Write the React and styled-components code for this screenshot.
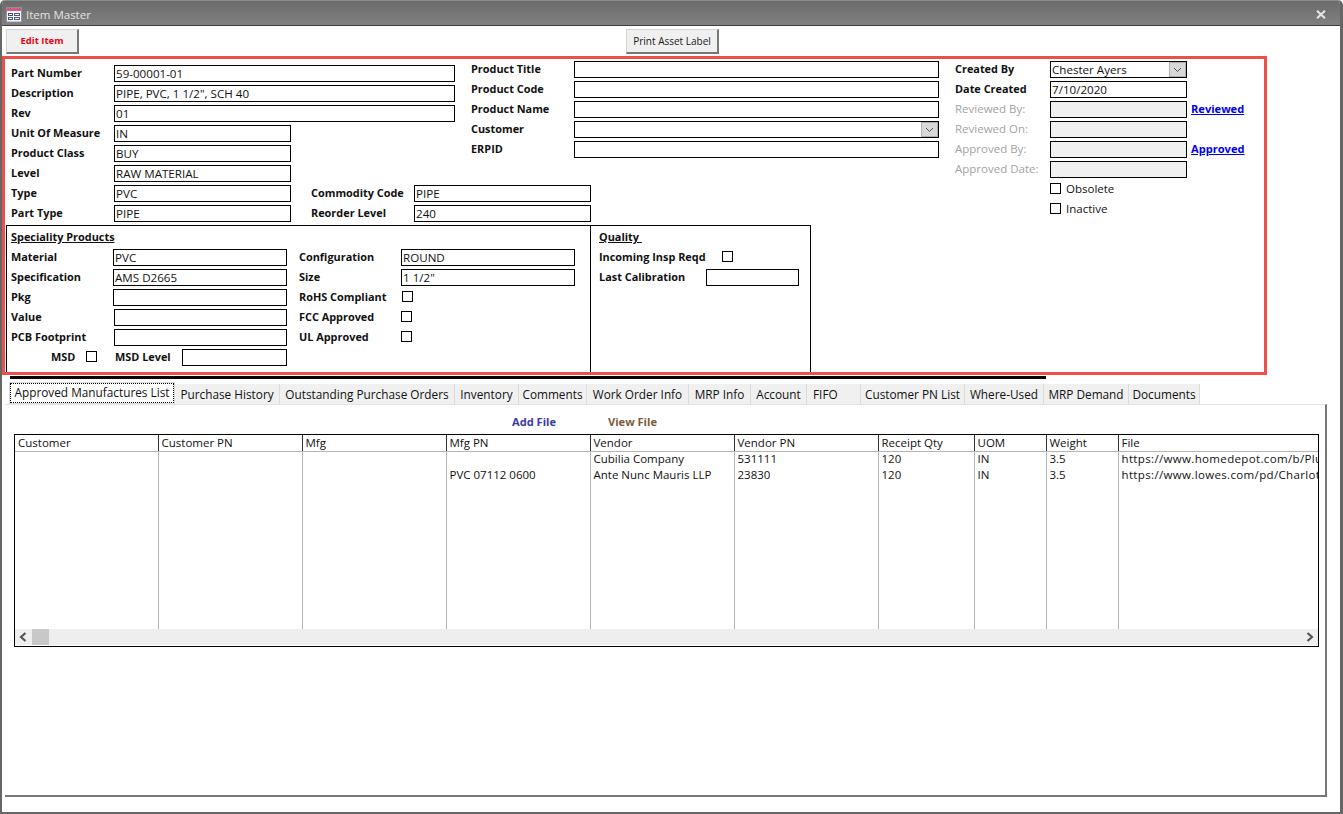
import React from 'react';
import styled, { createGlobalStyle } from 'styled-components';

const GlobalStyle = createGlobalStyle`
  * { box-sizing: border-box; }
  body {
    margin: 0;
    background: #fff;
    font-family: "Open Sans", "Noto Sans", sans-serif;
    font-size: 11.5px;
    color: #111;
  }
`;

const tabs = [
  ['Approved Manufactures List', 166],
  ['Purchase History', 105],
  ['Outstanding Purchase Orders', 175],
  ['Inventory', 64],
  ['Comments', 68],
  ['Work Order Info', 102],
  ['MRP Info', 62],
  ['Account', 56],
  ['FIFO', 54, true],
  ['Customer PN List', 104],
  ['Where-Used', 79],
  ['MRP Demand', 85],
  ['Documents', 71],
];

const columns = [
  ['Customer', 143],
  ['Customer PN', 144],
  ['Mfg', 144],
  ['Mfg PN', 144],
  ['Vendor', 144],
  ['Vendor PN', 144],
  ['Receipt Qty', 96],
  ['UOM', 72],
  ['Weight', 72],
  ['File', 200],
];

const rows = [
  ['', '', '', '', 'Cubilia Company', '531111', '120', 'IN', '3.5', 'https://www.homedepot.com/b/Plumbing'],
  ['', '', '', 'PVC 07112 0600', 'Ante Nunc Mauris LLP', '23830', '120', 'IN', '3.5', 'https://www.lowes.com/pd/Charlotte-Pipe'],
];

const FormIcon = () => (
  <svg width="16" height="16" viewBox="0 0 16 16">
    <rect x="0.5" y="0.5" width="15" height="14.5" fill="#f6f8fc" stroke="#9a8aa0" />
    <rect x="1" y="1" width="14" height="3" fill="#d9587f" />
    <rect x="2.5" y="6.5" width="4" height="2" fill="#fff" stroke="#46577c" />
    <rect x="8.5" y="6.5" width="5" height="2" fill="#fff" stroke="#46577c" />
    <rect x="2.5" y="10.5" width="4" height="2" fill="#fff" stroke="#46577c" />
    <rect x="8.5" y="10.5" width="5" height="2" fill="#fff" stroke="#46577c" />
  </svg>
);

const CloseIcon = () => (
  <svg width="10" height="9" viewBox="0 0 10 9">
    <path d="M1 0.8 L9 8.2 M9 0.8 L1 8.2" fill="none" stroke="#e2e2e2" strokeWidth="2.2" />
  </svg>
);

const Chevron = ({ dir }) => (
  <svg width="9" height="10" viewBox="0 0 9 10">
    <polyline
      points={dir === 'left' ? '6.5,1 2,5 6.5,9' : '2.5,1 7,5 2.5,9'}
      fill="none"
      stroke="#555"
      strokeWidth="2.2"
    />
  </svg>
);

const Field = ({ w, value, disabled }) => <Input $w={w} $disabled={disabled}>{value}</Input>;

const Combo = ({ w, value }) => (
  <Input $w={w}>
    {value}
    <ComboButton>
      <svg width="9" height="6" viewBox="0 0 9 6">
        <polyline points="1,1 4.5,4.5 8,1" fill="none" stroke="#555" strokeWidth="1" />
      </svg>
    </ComboButton>
  </Input>
);

const Row = ({ label, labelW, muted, children }) => (
  <FieldRow>
    <Label $w={labelW} $muted={muted}>{label}</Label>
    {children}
  </FieldRow>
);

const App = () => {
  return (
    <Window>
      <GlobalStyle />
      <TitleBar>
        <FormIcon />
        <Title>Item Master</Title>
        <CloseSlot><CloseIcon /></CloseSlot>
      </TitleBar>

      <Toolbar>
        <Button $red>Edit Item</Button>
        <Button $offset={547} $w={93}>Print Asset Label</Button>
      </Toolbar>

      <Frame>
        <TopGrid>
          <LeftCol>
            <Row label="Part Number" labelW={103}><Field w={341} value="59-00001-01" /></Row>
            <Row label="Description" labelW={103}><Field w={341} value={'PIPE, PVC, 1 1/2", SCH 40'} /></Row>
            <Row label="Rev" labelW={103}><Field w={341} value="01" /></Row>
            <Row label="Unit Of Measure" labelW={103}><Field w={177} value="IN" /></Row>
            <Row label="Product Class" labelW={103}><Field w={177} value="BUY" /></Row>
            <Row label="Level" labelW={103}><Field w={177} value="RAW MATERIAL" /></Row>
          </LeftCol>

          <MidCol>
            <Row label="Product Title" labelW={103}><Field w={365} /></Row>
            <Row label="Product Code" labelW={103}><Field w={365} /></Row>
            <Row label="Product Name" labelW={103}><Field w={365} /></Row>
            <Row label="Customer" labelW={103}><Combo w={365} /></Row>
            <Row label="ERPID" labelW={103}><Field w={365} /></Row>
          </MidCol>

          <RightCol>
            <Row label="Created By" labelW={95}><Combo w={137} value="Chester Ayers" /></Row>
            <Row label="Date Created" labelW={95}><Field w={137} value="7/10/2020" /></Row>
            <Row label="Reviewed By:" labelW={95} muted>
              <Field w={137} disabled />
              <LinkText>Reviewed</LinkText>
            </Row>
            <Row label="Reviewed On:" labelW={95} muted><Field w={137} disabled /></Row>
            <Row label="Approved By:" labelW={95} muted>
              <Field w={137} disabled />
              <LinkText>Approved</LinkText>
            </Row>
            <Row label="Approved Date:" labelW={95} muted><Field w={137} disabled /></Row>
            <CheckRow><Check /><CheckText>Obsolete</CheckText></CheckRow>
            <CheckRow><Check /><CheckText>Inactive</CheckText></CheckRow>
          </RightCol>

          <LowerRows>
            <FieldRow>
              <Label $w={103}>Type</Label>
              <Field w={177} value="PVC" />
              <Label $w={103} $gap={20}>Commodity Code</Label>
              <Field w={177} value="PIPE" />
            </FieldRow>
            <FieldRow>
              <Label $w={103}>Part Type</Label>
              <Field w={177} value="PIPE" />
              <Label $w={103} $gap={20}>Reorder Level</Label>
              <Field w={177} value="240" />
            </FieldRow>
          </LowerRows>
        </TopGrid>

        <Boxes>
          <SpecialityBox>
            <BoxHeading>Speciality Products</BoxHeading>
            <SpecialityCols>
              <Stack>
                <Row label="Material" labelW={102}><Field w={174} value="PVC" /></Row>
                <Row label="Specification" labelW={102}><Field w={174} value="AMS D2665" /></Row>
                <Row label="Pkg" labelW={102}><Field w={174} /></Row>
                <Row label="Value" labelW={103}><Field w={173} /></Row>
                <Row label="PCB Footprint" labelW={103}><Field w={173} /></Row>
                <MsdRow>
                  <Label $w={35}>MSD</Label>
                  <Check />
                  <Label $w={67} $gap={18}>MSD Level</Label>
                  <Field w={105} />
                </MsdRow>
              </Stack>
              <Stack>
                <Row label="Configuration" labelW={102}><Field w={174} value="ROUND" /></Row>
                <Row label="Size" labelW={102}><Field w={174} value={'1 1/2"'} /></Row>
                <Row label="RoHS Compliant" labelW={103}><Check /></Row>
                <Row label="FCC Approved" labelW={102}><Check /></Row>
                <Row label="UL Approved" labelW={102}><Check /></Row>
              </Stack>
            </SpecialityCols>
          </SpecialityBox>

          <QualityBox>
            <BoxHeading>Quality </BoxHeading>
            <Stack>
              <Row label="Incoming Insp Reqd" labelW={123}><Check /></Row>
              <Row label="Last Calibration" labelW={107}><Field w={93} /></Row>
            </Stack>
          </QualityBox>
        </Boxes>
      </Frame>

      <BlackRule />

      <TabStrip>
        {tabs.map(([name, w, left], i) => (
          <Tab key={name} $w={w} $active={i === 0} $left={left}>
            {i === 0 ? <FocusRing>{name}</FocusRing> : name}
          </Tab>
        ))}
      </TabStrip>

      <Panel>
        <Actions>
          <ActionLink $color="#3b3ba6" $w={96}>Add File</ActionLink>
          <ActionLink $color="#7c5c3c">View File</ActionLink>
        </Actions>

        <Sheet>
          <Table>
            <colgroup>
              {columns.map(([name, w]) => <col key={name} width={w} />)}
            </colgroup>
            <thead>
              <tr>
                {columns.map(([name]) => <Th key={name}>{name}</Th>)}
              </tr>
            </thead>
            <tbody>
              {rows.map((row, r) => (
                <BodyRow key={r}>
                  {row.map((cell, c) => (
                    <Td key={c} $wide={c === row.length - 1}>{cell}</Td>
                  ))}
                </BodyRow>
              ))}
              <tr>
                {columns.map(([name]) => <Td key={name} />)}
              </tr>
            </tbody>
          </Table>
          <ScrollBar>
            <ArrowBox><Chevron dir="left" /></ArrowBox>
            <Thumb />
            <ScrollTrack />
            <ArrowBox><Chevron dir="right" /></ArrowBox>
          </ScrollBar>
        </Sheet>
      </Panel>
    </Window>
  );
};

const Window = styled.div`
  display: flex;
  flex-direction: column;
  height: 814px;
  overflow: hidden;
  background: #fff;
  border-style: solid;
  border-color: #666;
  border-width: 0 3px 2px 2px;
  border-radius: 5px 5px 0 0;
`;

const TitleBar = styled.div`
  flex: none;
  display: flex;
  align-items: center;
  height: 26px;
  margin: 0 -3px 0 -2px;
  padding: 3px 17px 0 6px;
  background: linear-gradient(#6b6b6b, #808080);
  border-top: 1px solid #8c8c8c;
  border-bottom: 1px solid #3f3f3f;
`;

const Title = styled.div`
  margin-left: 4px;
  font-size: 11.5px;
  color: #e2e2e2;
`;

const CloseSlot = styled.div`
  display: flex;
  margin-left: auto;
`;

const Toolbar = styled.div`
  flex: none;
  display: flex;
  height: 30px;
  padding: 3px 0 0 4px;
`;

const Button = styled.div`
  display: flex;
  align-items: center;
  justify-content: center;
  width: ${(p) => p.$w || 73}px;
  height: 25px;
  margin-left: ${(p) => p.$offset || 0}px;
  padding-bottom: 1px;
  background: #f0f0f0;
  border-style: solid;
  border-color: #d4d4d4 #777 #777 #d4d4d4;
  border-width: 1px 2px 2px 1px;
  font-size: ${(p) => (p.$red ? 9.5 : 10)}px;
  font-weight: ${(p) => (p.$red ? 700 : 400)};
  color: ${(p) => (p.$red ? '#f00014' : '#1a1a1a')};
`;

const Frame = styled.div`
  flex: none;
  width: 1265px;
  height: 319px;
  border: 3px solid #ef4f49;
`;

const TopGrid = styled.div`
  display: grid;
  grid-template-columns: 466px 484px 1fr;
  grid-template-rows: 126px 40px;
`;

const Stack = styled.div`
  display: flex;
  flex-direction: column;
  gap: 3px;
`;

const LeftCol = styled(Stack)`
  grid-column: 1;
  grid-row: 1;
  padding: 6px 0 3px 6px;
`;

const MidCol = styled(Stack)`
  grid-column: 2;
  grid-row: 1;
  padding-top: 2px;
`;

const RightCol = styled(Stack)`
  grid-column: 3;
  grid-row: 1 / span 2;
  padding-top: 2px;
`;

const LowerRows = styled(Stack)`
  grid-column: 1 / span 2;
  grid-row: 2;
  padding-left: 6px;
`;

const FieldRow = styled.div`
  display: flex;
  align-items: center;
  height: 17px;
`;

const MsdRow = styled(FieldRow)`
  padding-left: 40px;
`;

const Label = styled.div`
  flex: none;
  width: ${(p) => p.$w}px;
  margin-left: ${(p) => p.$gap || 0}px;
  margin-top: -2px;
  font-size: ${(p) => (p.$muted ? 11.5 : 10.9)}px;
  font-weight: ${(p) => (p.$muted ? 400 : 700)};
  color: ${(p) => (p.$muted ? '#a3a3a3' : '#111')};
  white-space: nowrap;
`;

const Input = styled.div`
  position: relative;
  flex: none;
  width: ${(p) => p.$w}px;
  height: 17px;
  padding-left: 1px;
  font-size: 11.6px;
  line-height: 15px;
  background: ${(p) => (p.$disabled ? '#f0f0f0' : '#fff')};
  border: 1px solid #000;
  white-space: nowrap;
  overflow: hidden;
`;

const ComboButton = styled.div`
  position: absolute;
  top: 0;
  right: 0;
  display: flex;
  align-items: center;
  justify-content: center;
  width: 17px;
  height: 15px;
  background: #d8d8d8;
  border: 1px solid #b0b0b0;
`;

const LinkText = styled.a`
  margin-left: 4px;
  margin-top: -3px;
  font-size: 11.1px;
  font-weight: 700;
  color: #0000ee;
  text-decoration: underline;
`;

const Check = styled.div`
  flex: none;
  width: 11px;
  height: 11px;
  margin-top: -2px;
  background: #fff;
  border: 1px solid #000;
`;

const CheckRow = styled(FieldRow)`
  gap: 5px;
  padding-left: 95px;
`;

const CheckText = styled.span`
  margin-top: -2px;
`;

const Boxes = styled.div`
  display: flex;
  height: 147px;
  margin-left: 1px;
`;

const SpecialityBox = styled.div`
  width: 585px;
  padding: 4px 0 0 4px;
  border: 1px solid #000;
  border-bottom: none;
`;

const QualityBox = styled.div`
  width: 220px;
  padding: 4px 0 0 8px;
  border: 1px solid #000;
  border-left: none;
  border-bottom: none;
`;

const BoxHeading = styled.div`
  height: 14px;
  margin-bottom: 5px;
  line-height: 14px;
  font-size: 10.9px;
  font-weight: 700;
  text-decoration: underline;
  white-space: pre;
`;

const SpecialityCols = styled.div`
  display: flex;
  gap: 12px;
`;

const BlackRule = styled.div`
  flex: none;
  width: 1036px;
  height: 3px;
  margin: 1px 0 0 8px;
  background: #000;
`;

const TabStrip = styled.div`
  flex: none;
  display: flex;
  align-items: flex-end;
  height: 22px;
  margin: 3px 0 0 7px;
  font-size: 11.8px;
`;

const Tab = styled.div`
  display: flex;
  align-items: center;
  justify-content: ${(p) => (p.$left ? 'flex-start' : 'center')};
  flex: none;
  width: ${(p) => p.$w}px;
  height: ${(p) => (p.$active ? 22 : 20)}px;
  padding-left: ${(p) => (p.$left ? 6 : 0)}px;
  background: ${(p) => (p.$active ? '#fff' : '#f0f0f0')};
  border-right: 1px solid #dcdcdc;
  border: ${(p) => (p.$active ? '1px solid #dcdcdc' : undefined)};
  white-space: nowrap;
`;

const FocusRing = styled.div`
  width: 100%;
  height: 100%;
  line-height: 17px;
  text-align: center;
  border: 1px dotted #000;
`;

const Panel = styled.div`
  flex: 1;
  margin: 0 13px 15px 3px;
  border-style: solid;
  border-color: #e4e4e4 #777 #777 transparent;
  border-width: 1px 2px 2px 0;
`;

const Actions = styled.div`
  display: flex;
  align-items: center;
  height: 29px;
  padding: 4px 0 0 507px;
`;

const ActionLink = styled.div`
  width: ${(p) => (p.$w ? `${p.$w}px` : 'auto')};
  font-size: 11.1px;
  font-weight: 700;
  color: ${(p) => p.$color};
`;

const Sheet = styled.div`
  width: 1305px;
  height: 213px;
  margin-left: 9px;
  border: 1px solid #000;
`;

const Table = styled.table`
  width: 1303px;
  height: 194px;
  table-layout: fixed;
  border-collapse: collapse;
`;

const Th = styled.th`
  height: 16px;
  padding: 0 3px;
  font-weight: 400;
  text-align: left;
  border-left: 1px solid #333;
  border-bottom: 1px solid #b5b5b5;
  &:first-child { border-left: none; }
`;

const BodyRow = styled.tr`
  height: 16px;
`;

const Td = styled.td`
  padding: 0 1px 2px 3px;
  line-height: 14px;
  letter-spacing: ${(p) => (p.$wide ? '0.35px' : 'normal')};
  white-space: nowrap;
  overflow: hidden;
  border-left: 1px solid #b5b5b5;
  &:first-child { border-left: none; }
`;

const ScrollBar = styled.div`
  display: flex;
  align-items: center;
  height: 16px;
  background: #eeeeee;
`;

const ArrowBox = styled.div`
  flex: none;
  display: flex;
  align-items: center;
  justify-content: center;
  width: 17px;
  height: 16px;
`;

const Thumb = styled.div`
  flex: none;
  width: 17px;
  height: 16px;
  background: #c8c8c8;
`;

const ScrollTrack = styled.div`
  flex: 1;
`;

export default App;
